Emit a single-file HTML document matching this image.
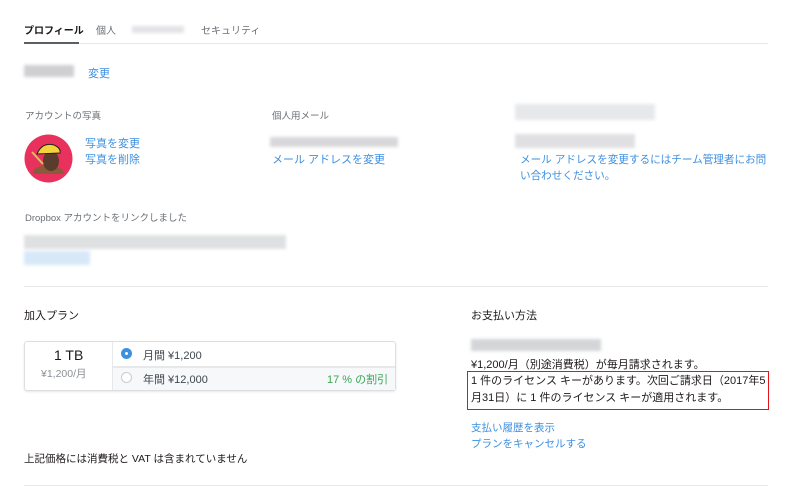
<!DOCTYPE html>
<html><head><meta charset="utf-8"><style>
*{margin:0;padding:0;box-sizing:border-box}
body{width:800px;height:492px;background:#fff;font-family:"Liberation Sans","Noto Sans CJK JP",sans-serif;color:#3d464d;position:relative;overflow:hidden;font-size:10px}
.a{position:absolute;white-space:nowrap}
.l{color:#3d8fe0}
.g{color:#6a7075}
.b{position:absolute;background:#d8d8da;filter:blur(1.5px)}
</style></head><body>
<div class="a" style="left:24px;top:22px;font-size:10px;font-weight:bold;color:#1e1919">プロフィール</div>
<div class="a g" style="left:96px;top:22px;font-size:10px">個人</div>
<div class="b" style="left:132px;top:26px;width:52px;height:7px;background:#e2e3e6"></div>
<div class="a g" style="left:201px;top:22px;font-size:10px">セキュリティ</div>
<div class="a" style="left:24px;top:43px;width:744px;height:1px;background:#e6e8ea"></div>
<div class="a" style="left:24px;top:42px;width:55px;height:2px;background:#5a6066"></div>

<div class="b" style="left:24px;top:65px;width:50px;height:12px;background:#cfcfd2"></div>
<div class="a l" style="left:88px;top:65px;font-size:11px">変更</div>

<div class="a g" style="left:25px;top:108px;font-size:9.5px">アカウントの写真</div>
<svg class="a" style="left:24px;top:134px" width="49" height="49" viewBox="0 0 49 49">
<circle cx="24.5" cy="24.5" r="24" fill="#e8315d"/>
<path d="M10 35 Q24 27 39 36 L40 40 L9 40Z" fill="#8a5a3a"/>
<ellipse cx="27" cy="27" rx="8" ry="10" fill="#5a3c2c"/>
<path d="M13 20 Q18 8 30 11 Q37 14 36 19 Z" fill="#f3d33a" stroke="#222" stroke-width="1"/>
<path d="M8 18 L19 30" stroke="#d9c060" stroke-width="2"/>
</svg>
<div class="a l" style="left:85px;top:135px;font-size:11px">写真を変更</div>
<div class="a l" style="left:85px;top:151px;font-size:11px">写真を削除</div>

<div class="a g" style="left:272px;top:108px;font-size:9.5px">個人用メール</div>
<div class="b" style="left:270px;top:137px;width:128px;height:10px"></div>
<div class="a l" style="left:272px;top:151px;font-size:11px">メール アドレスを変更</div>

<div class="b" style="left:515px;top:104px;width:140px;height:16px;background:#e7e8ea"></div>
<div class="b" style="left:515px;top:134px;width:120px;height:14px;background:#e0e0e2"></div>
<div class="a l" style="left:520px;top:152px;font-size:10.6px;line-height:16px">メール アドレスを変更するにはチーム管理者にお問<br>い合わせください。</div>

<div class="a g" style="left:25px;top:210px;font-size:9.5px">Dropbox アカウントをリンクしました</div>
<div class="b" style="left:24px;top:235px;width:262px;height:14px;background:#dfe0e2"></div>
<div class="b" style="left:24px;top:251px;width:66px;height:14px;background:#d7e8f8"></div>

<div class="a" style="left:24px;top:286px;width:744px;height:1px;background:#e6e8ea"></div>

<div class="a" style="left:24px;top:307px;font-size:11px;color:#1e1919">加入プラン</div>
<div class="a" style="left:24px;top:341px;width:372px;height:50px;border:1px solid #dcdee1;border-radius:3px;box-shadow:0 1px 2px rgba(0,0,0,.1)"></div>
<div class="a" style="left:112px;top:342px;width:1px;height:48px;background:#e6e8ea"></div>
<div class="a" style="left:113px;top:366px;width:282px;height:24px;background:#f6f8fa;border-top:2px solid #e6e8ea"></div>
<div class="a" style="left:54px;top:347px;font-size:14px;color:#1e1919">1 TB</div>
<div class="a g" style="left:41px;top:366px;font-size:10.5px;color:#8a9095">¥1,200/月</div>
<div class="a" style="left:121px;top:348px;width:11px;height:11px;border-radius:50%;background:#3d8fe0"></div>
<div class="a" style="left:125px;top:352px;width:3px;height:3px;border-radius:50%;background:#fff"></div>
<div class="a" style="left:143px;top:347px;font-size:11px">月間 ¥1,200</div>
<div class="a" style="left:121px;top:372px;width:11px;height:11px;border-radius:50%;border:1px solid #c8cbcf;background:#fff"></div>
<div class="a" style="left:143px;top:371px;font-size:11px">年間 ¥12,000</div>
<div class="a" style="left:327px;top:371px;font-size:11px;color:#3aa656">17 % の割引</div>

<div class="a" style="left:24px;top:451px;font-size:10.5px;color:#1e1919">上記価格には消費税と VAT は含まれていません</div>

<div class="a" style="left:471px;top:307px;font-size:11px;color:#1e1919">お支払い方法</div>
<div class="b" style="left:471px;top:339px;width:130px;height:12px;background:#d4d5d8"></div>
<div class="a" style="left:471px;top:356px;font-size:11px;color:#1e1919">¥1,200/月（別途消費税）が毎月請求されます。</div>
<div class="a" style="left:467px;top:371px;width:302px;height:39px;border:1px solid #e5141b"></div>
<div class="a" style="left:471px;top:373px;font-size:11px;line-height:17px;color:#1e1919">1 件のライセンス キーがあります。次回ご請求日（2017年5<br>月31日）に 1 件のライセンス キーが適用されます。</div>
<div class="a l" style="left:471px;top:420px;font-size:10.5px">支払い履歴を表示</div>
<div class="a l" style="left:471px;top:436px;font-size:10.5px">プランをキャンセルする</div>

<div class="a" style="left:24px;top:485px;width:744px;height:1px;background:#e6e8ea"></div>
</body></html>
